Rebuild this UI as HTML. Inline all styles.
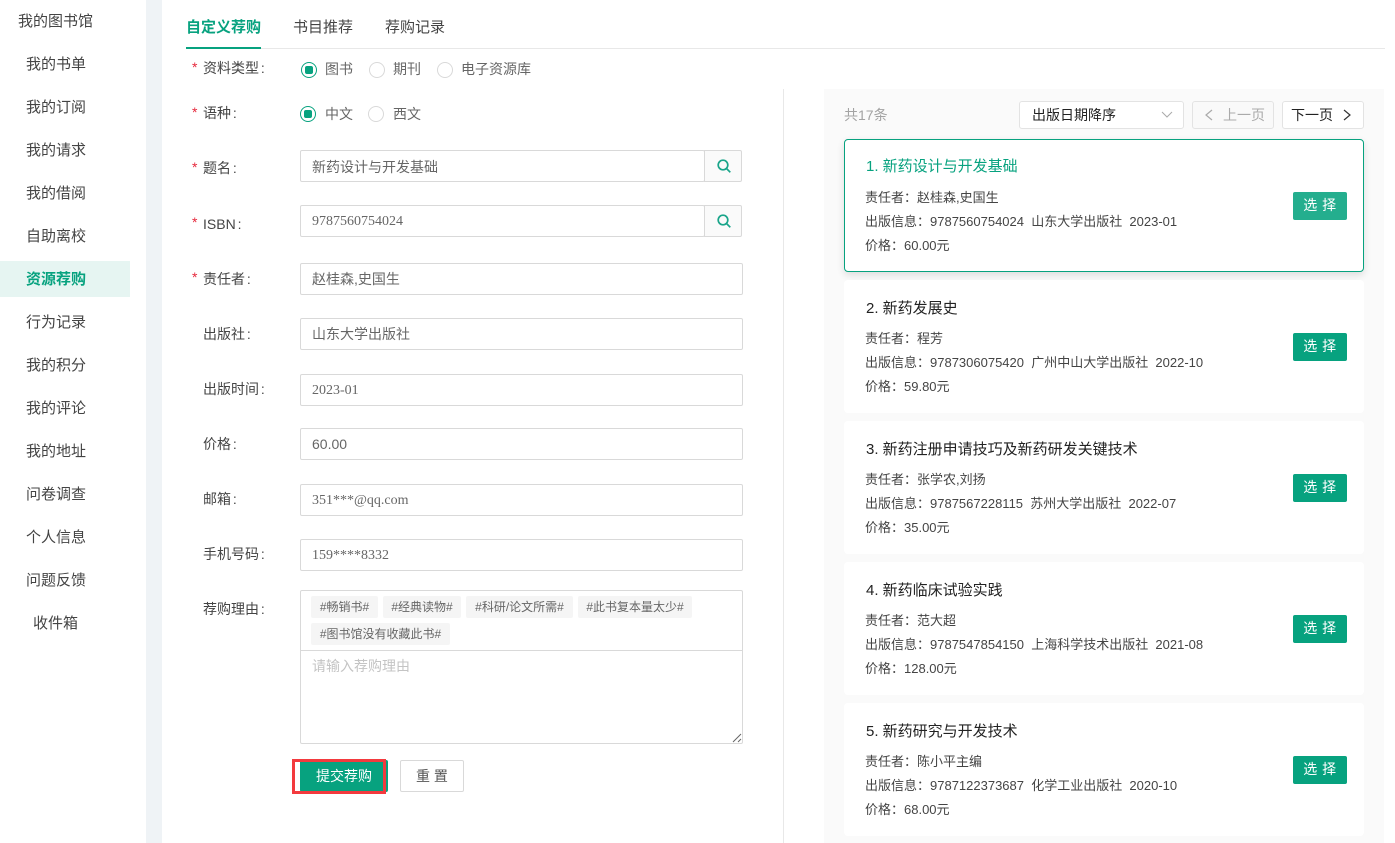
<!DOCTYPE html>
<html lang="zh"><head><meta charset="utf-8"><title>资源荐购</title>
<style>
html,body{margin:0;padding:0}
body{width:1395px;height:843px;position:relative;overflow:hidden;background:#fff;font-family:"Liberation Sans","Noto Sans CJK SC",sans-serif;color:#333}
div,span,svg{position:absolute;box-sizing:border-box;white-space:nowrap}
.m{left:0;width:130px;height:35px;line-height:35px;font-size:15px;color:#444}
.m span{top:1px}
.l{font-size:14px;left:203px;color:#444;line-height:20px;word-spacing:-2px}
.s{font-size:14px;left:192px;color:#e6283c;line-height:20px}
.i{left:300px;width:443px;height:32px;border:1px solid #d9d9d9;border-radius:2px;font-size:14px;line-height:30px;padding-left:11px;color:#666;background:#fff}
.se{font-family:"Liberation Serif","Noto Sans CJK SC",serif;line-height:32px}
.b{left:704px;width:38px;height:32px;border:1px solid #d9d9d9;border-radius:0 2px 2px 0;background:#fafafa}
.r{width:16px;height:16px;border:1px solid #d9d9d9;border-radius:50%;background:#fff}
.r.on{border:1.5px solid #07a27f}
.r.on:after{content:"";position:absolute;left:2.5px;top:2.5px;width:8px;height:8px;background:#07a27f;border-radius:2px}
.rt{font-size:14px;color:#666;line-height:20px}
.t{height:22px;line-height:22px;background:#f5f5f5;border-radius:2px;font-size:12px;color:#666;text-align:center}
.c{left:844px;width:520px;height:133px;background:#fff;border-radius:4px}
.c .h{left:22px;top:19px;font-size:15px;line-height:20px;color:#222}
.c .a{left:21px;font-size:13px;line-height:20px;color:#444}
.c .g{left:449px;top:53px;width:54px;height:28px;background:#07a27f;color:#fff;border-radius:2px;font-size:14px;line-height:27px;text-align:center;letter-spacing:.5px}
.p{top:101px;height:28px;background:#fff;border:1px solid #e3e3e3;border-radius:3px;font-size:14px;line-height:26px}
</style></head><body>
<div style="left:146px;top:0;width:16px;height:843px;background:#eff3f6"></div>

<div class="m" style="top:3px"><span style="left:18px">我的图书馆</span></div>
<div class="m" style="top:46px"><span style="left:26px">我的书单</span></div>
<div class="m" style="top:89px"><span style="left:26px">我的订阅</span></div>
<div class="m" style="top:132px"><span style="left:26px">我的请求</span></div>
<div class="m" style="top:175px"><span style="left:26px">我的借阅</span></div>
<div class="m" style="top:218px"><span style="left:26px">自助离校</span></div>
<div class="m" style="top:261px;height:36px;background:#e6f5f2;color:#07a27f;font-weight:700"><span style="left:26px">资源荐购</span></div>
<div class="m" style="top:304px"><span style="left:26px">行为记录</span></div>
<div class="m" style="top:347px"><span style="left:26px">我的积分</span></div>
<div class="m" style="top:390px"><span style="left:26px">我的评论</span></div>
<div class="m" style="top:433px"><span style="left:26px">我的地址</span></div>
<div class="m" style="top:476px"><span style="left:26px">问卷调查</span></div>
<div class="m" style="top:519px"><span style="left:26px">个人信息</span></div>
<div class="m" style="top:562px"><span style="left:26px">问题反馈</span></div>
<div class="m" style="top:605px"><span style="left:33px">收件箱</span></div>

<div style="left:186px;top:48px;width:1199px;height:1px;background:#e8e8e8"></div>
<div style="left:186px;top:47px;width:75px;height:2px;background:#07a27f"></div>
<div style="left:186px;top:17px;font-size:15px;line-height:21px;color:#07a27f;font-weight:700">自定义荐购</div>
<div style="left:293px;top:17px;font-size:15px;line-height:21px;color:#444">书目推荐</div>
<div style="left:385px;top:17px;font-size:15px;line-height:21px;color:#444">荐购记录</div>

<div class="s" style="top:57px">*</div><div class="l" style="top:58px">资料类型 :</div>
<div class="r on" style="left:301px;top:62px"></div><div class="rt" style="left:325px;top:59px">图书</div>
<div class="r" style="left:369px;top:62px"></div><div class="rt" style="left:393px;top:59px">期刊</div>
<div class="r" style="left:437px;top:62px"></div><div class="rt" style="left:461px;top:59px">电子资源库</div>

<div class="s" style="top:102px">*</div><div class="l" style="top:103px">语种 :</div>
<div class="r on" style="left:300px;top:106px"></div><div class="rt" style="left:325px;top:104px">中文</div>
<div class="r" style="left:368px;top:106px"></div><div class="rt" style="left:393px;top:104px">西文</div>

<div class="s" style="top:157px">*</div><div class="l" style="top:158px">题名 :</div>
<div class="i" style="top:150px;width:405px;line-height:32px">新药设计与开发基础</div>
<div class="b" style="top:150px"><svg style="left:12px;top:8px" width="14" height="14" viewBox="0 0 14 14" fill="none" stroke="#1aa58a" stroke-width="1.7"><circle cx="6" cy="6" r="4.8"/><path d="M9.5 9.5l3.8 3.8"/></svg></div>

<div class="s" style="top:212px">*</div><div class="l" style="top:214px">ISBN :</div>
<div class="i se" style="top:205px;width:405px">9787560754024</div>
<div class="b" style="top:205px"><svg style="left:12px;top:8px" width="14" height="14" viewBox="0 0 14 14" fill="none" stroke="#1aa58a" stroke-width="1.7"><circle cx="6" cy="6" r="4.8"/><path d="M9.5 9.5l3.8 3.8"/></svg></div>

<div class="s" style="top:267px">*</div><div class="l" style="top:269px">责任者 :</div>
<div class="i" style="top:263px">赵桂森,史国生</div>

<div class="l" style="top:324px">出版社 :</div><div class="i" style="top:318px">山东大学出版社</div>
<div class="l" style="top:379px">出版时间 :</div><div class="i se" style="top:374px">2023-01</div>
<div class="l" style="top:434px">价格 :</div><div class="i" style="top:428px">60.00</div>
<div class="l" style="top:489px">邮箱 :</div><div class="i se" style="top:484px">351***@qq.com</div>
<div class="l" style="top:544px">手机号码 :</div><div class="i se" style="top:539px">159****8332</div>

<div class="l" style="top:599px">荐购理由 :</div>
<div style="left:300px;top:590px;width:443px;height:61px;border:1px solid #d9d9d9;border-bottom:0;border-radius:2px 2px 0 0"></div>
<div class="t" style="left:311px;top:596px;width:67px">#畅销书#</div>
<div class="t" style="left:383px;top:596px;width:78px">#经典读物#</div>
<div class="t" style="left:466px;top:596px;width:107px">#科研/论文所需#</div>
<div class="t" style="left:578px;top:596px;width:114px">#此书复本量太少#</div>
<div class="t" style="left:311px;top:623px;width:139px">#图书馆没有收藏此书#</div>
<div style="left:300px;top:650px;width:443px;height:94px;border:1px solid #d9d9d9;border-radius:0 0 2px 2px;font-size:14px;color:#c4c4c4;padding:5px 11px;line-height:20px">请输入荐购理由</div>
<svg style="left:731px;top:732px" width="11" height="11" viewBox="0 0 11 11" stroke="#666" stroke-width="1"><path d="M2 10L10 2M7 10L10 7"/></svg>

<div style="left:300px;top:760px;width:88px;height:32px;background:#07a27f;border-radius:2px"></div>
<div style="left:295px;top:761px;width:5px;height:31px;background:#fff"></div>
<div style="left:292px;top:759px;width:94px;height:35px;border:3px solid #f33a3e"></div>
<div style="left:316px;top:766px;font-size:14px;line-height:21px;color:#fff">提交荐购</div>
<div style="left:400px;top:760px;width:64px;height:32px;border:1px solid #d9d9d9;border-radius:2px;font-size:14px;line-height:30px;text-align:center;color:#555">重 置</div>

<div style="left:783px;top:89px;width:1px;height:754px;background:#e8e8e8"></div>
<div style="left:824px;top:89px;width:560px;height:754px;background:#fafafa"></div>
<div style="left:844px;top:105px;font-size:14px;line-height:20px;color:#a3a3a3">共17条</div>

<div class="p" style="left:1019px;width:165px;color:#222"><span style="left:12px;top:0">出版日期降序</span><svg style="left:141px;top:9px" width="12" height="8" viewBox="0 0 12 8" fill="none" stroke="#aaa"><path d="M1 1l5 5 5-5"/></svg></div>
<div class="p" style="left:1192px;width:82px;color:#aaa;background:#f9f9f9"><svg style="left:12px;top:7px" width="8" height="12" viewBox="0 0 8 12" fill="none" stroke="#aaa" stroke-width="1.2"><path d="M7 1L1 6l6 5"/></svg><span style="left:30px;top:0">上一页</span></div>
<div class="p" style="left:1282px;width:82px;color:#222"><span style="left:8px;top:0">下一页</span><svg style="left:60px;top:7px" width="8" height="12" viewBox="0 0 8 12" fill="none" stroke="#333" stroke-width="1.2"><path d="M1 1l6 5-6 5"/></svg></div>

<div class="c" style="top:139px;border:1px solid #07a27f;box-shadow:0 3px 8px rgba(0,0,0,.12)">
<div class="h" style="left:21px;top:17px;color:#07a27f">1. 新药设计与开发基础</div>
<div class="a" style="left:20px;top:48px">责任者：赵桂森,史国生</div>
<div class="a" style="left:20px;top:72px">出版信息：9787560754024&nbsp; 山东大学出版社&nbsp; 2023-01</div>
<div class="a" style="left:20px;top:96px">价格：60.00元</div>
<div class="g" style="left:448px;top:52px;background:#24ae8e">选 择</div></div>

<div class="c" style="top:280px"><div class="h">2. 新药发展史</div>
<div class="a" style="top:49px">责任者：程芳</div>
<div class="a" style="top:73px">出版信息：9787306075420&nbsp; 广州中山大学出版社&nbsp; 2022-10</div>
<div class="a" style="top:97px">价格：59.80元</div><div class="g">选 择</div></div>

<div class="c" style="top:421px"><div class="h">3. 新药注册申请技巧及新药研发关键技术</div>
<div class="a" style="top:49px">责任者：张学农,刘扬</div>
<div class="a" style="top:73px">出版信息：9787567228115&nbsp; 苏州大学出版社&nbsp; 2022-07</div>
<div class="a" style="top:97px">价格：35.00元</div><div class="g">选 择</div></div>

<div class="c" style="top:562px"><div class="h">4. 新药临床试验实践</div>
<div class="a" style="top:49px">责任者：范大超</div>
<div class="a" style="top:73px">出版信息：9787547854150&nbsp; 上海科学技术出版社&nbsp; 2021-08</div>
<div class="a" style="top:97px">价格：128.00元</div><div class="g">选 择</div></div>

<div class="c" style="top:703px"><div class="h">5. 新药研究与开发技术</div>
<div class="a" style="top:49px">责任者：陈小平主编</div>
<div class="a" style="top:73px">出版信息：9787122373687&nbsp; 化学工业出版社&nbsp; 2020-10</div>
<div class="a" style="top:97px">价格：68.00元</div><div class="g">选 择</div></div>
</body></html>
